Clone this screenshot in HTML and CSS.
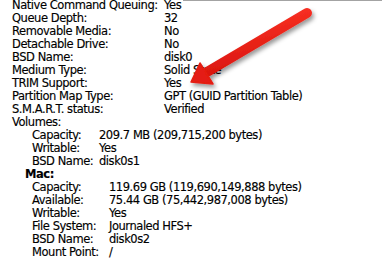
FILE: index.html
```
<!DOCTYPE html>
<html>
<head>
<meta charset="utf-8">
<link rel="stylesheet" href="styles.css">
</head>
<body>
<div class="topline"></div>
<div class="sheet">
  <dl class="grid main">
    <dt>Native Command Queuing:</dt><dd>Yes</dd>
    <dt>Queue Depth:</dt><dd>32</dd>
    <dt>Removable Media:</dt><dd>No</dd>
    <dt>Detachable Drive:</dt><dd>No</dd>
    <dt>BSD Name:</dt><dd>disk0</dd>
    <dt>Medium Type:</dt><dd>Solid State</dd>
    <dt>TRIM Support:</dt><dd>Yes</dd>
    <dt>Partition Map Type:</dt><dd>GPT (GUID Partition Table)</dd>
    <dt>S.M.A.R.T. status:</dt><dd>Verified</dd>
  </dl>
  <div class="section">Volumes:</div>
  <dl class="grid vol1">
    <dt>Capacity:</dt><dd>209.7 MB (209,715,200 bytes)</dd>
    <dt>Writable:</dt><dd>Yes</dd>
    <dt>BSD Name:</dt><dd>disk0s1</dd>
  </dl>
  <div class="volname">Mac:</div>
  <dl class="grid vol2">
    <dt>Capacity:</dt><dd>119.69 GB (119,690,149,888 bytes)</dd>
    <dt>Available:</dt><dd>75.44 GB (75,442,987,008 bytes)</dd>
    <dt>Writable:</dt><dd>Yes</dd>
    <dt>File System:</dt><dd>Journaled HFS+</dd>
    <dt>BSD Name:</dt><dd>disk0s2</dd>
    <dt>Mount Point:</dt><dd>/</dd>
  </dl>
</div>
<svg class="arrow" width="382" height="264" viewBox="0 0 382 264" xmlns="http://www.w3.org/2000/svg">
  <defs>
    <filter id="sh" x="-20%" y="-20%" width="140%" height="140%">
      <feDropShadow dx="2" dy="3" stdDeviation="2" flood-color="#000" flood-opacity="0.4"/>
    </filter>
    <linearGradient id="rg" x1="0" y1="0" x2="0.3" y2="1">
      <stop offset="0" stop-color="#ff3527"/>
      <stop offset="1" stop-color="#d9160e"/>
    </linearGradient>
  </defs>
  <g filter="url(#sh)">
    <line x1="307" y1="13" x2="207" y2="72" stroke="url(#rg)" stroke-width="10" stroke-linecap="round"/>
    <polygon points="191,82 200,63 213,84" fill="#e41c12" stroke="#e41c12" stroke-width="1.5" stroke-linejoin="round"/>
  </g>
</svg>
</body>
</html>
```
FILE: styles.css
```
html, body {
  margin: 0;
  padding: 0;
  background: #fff;
}
body {
  width: 382px;
  height: 264px;
  overflow: hidden;
  position: relative;
  font-family: "DejaVu Sans", Verdana, sans-serif;
  font-size: 11.5px;
  letter-spacing: -0.45px;
  line-height: 13px;
  color: #000;
  -webkit-text-stroke: 0.15px #000;
}
.topline {
  height: 1px;
  margin-left: 183px;
  background: #a3a3a3;
}
.sheet {
  margin-top: -2px;
  padding-left: 12px;
}
.grid {
  display: grid;
  margin: 0;
}
.grid dt, .grid dd {
  margin: 0;
  white-space: nowrap;
}
.main {
  grid-template-columns: 152px auto;
}
.vol1 {
  margin-left: 20px;
  grid-template-columns: 67px auto;
}
.volname {
  margin-left: 13px;
  font-weight: bold;
}
.vol2 {
  margin-left: 20px;
  grid-template-columns: 77px auto;
}
.arrow {
  position: absolute;
  left: 0;
  top: 0;
  pointer-events: none;
}
```
